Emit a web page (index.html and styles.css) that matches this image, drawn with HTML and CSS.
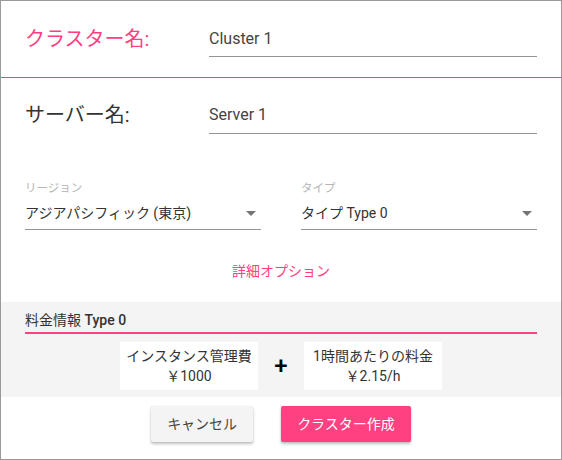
FILE: index.html
```html
<!DOCTYPE html>
<html lang="ja">
<head>
<meta charset="utf-8">
<link rel="stylesheet" href="styles.css">
</head>
<body>
<div class="dialog">
  <div class="row head">
    <div class="row-label pink">クラスター名:</div>
    <div class="field">Cluster 1</div>
  </div>
  <div class="row server">
    <div class="row-label">サーバー名:</div>
    <div class="field">Server 1</div>
  </div>
  <div class="selects">
    <div class="select">
      <div class="select-label">リージョン</div>
      <div class="select-value"><span>アジアパシフィック (東京)</span><span class="arrow"></span></div>
    </div>
    <div class="select">
      <div class="select-label">タイプ</div>
      <div class="select-value"><span>タイプ Type 0</span><span class="arrow"></span></div>
    </div>
  </div>
  <div class="more">詳細オプション</div>
  <div class="pricing">
    <div class="pricing-title">料金情報 <b>Type 0</b></div>
    <div class="pricing-boxes">
      <div class="price-box"><div>インスタンス管理費</div><div>￥1000</div></div>
      <div class="plus">+</div>
      <div class="price-box"><div>1時間あたりの料金</div><div>￥2.15/h</div></div>
    </div>
  </div>
  <div class="actions">
    <div class="btn btn-cancel">キャンセル</div>
    <div class="btn btn-create">クラスター作成</div>
  </div>
</div>
</body>
</html>
```
FILE: styles.css
```css
html, body {
  margin: 0;
  padding: 0;
  background: #fff;
}
.dialog {
  width: 562px;
  height: 460px;
  box-sizing: border-box;
  border: 1px solid #9a9a9a;
  font-family: Roboto, "Noto Sans CJK JP", sans-serif;
  color: #333;
  overflow: hidden;
}
.row {
  display: flex;
  align-items: flex-start;
  padding: 0 24px;
}
.head {
  height: 77px;
  box-sizing: border-box;
  padding-top: 28px;
  border-bottom: 1px solid #ff4081;
}
.server {
  padding-top: 27px;
}
.row-label {
  width: 184px;
  font-size: 20px;
  line-height: 20px;
  color: #333;
}
.row-label.pink {
  color: #ff4081;
}
.field {
  flex: 1;
  font-size: 16px;
  line-height: 20px;
  color: #444;
  padding-bottom: 7px;
  border-bottom: 1px solid #949494;
}
.server .field {
  padding-bottom: 8px;
}
.selects {
  display: flex;
  gap: 40px;
  padding: 0 24px;
  margin-top: 46px;
}
.select {
  flex: 1;
}
.select-label {
  font-size: 11.5px;
  line-height: 16px;
  color: #b4b4b4;
}
.select-value {
  display: flex;
  align-items: center;
  justify-content: space-between;
  margin-top: 7px;
  font-size: 14px;
  line-height: 20px;
  color: #333;
  padding-bottom: 6px;
  border-bottom: 1px solid #949494;
}
.arrow {
  width: 0;
  height: 0;
  border-left: 5px solid transparent;
  border-right: 5px solid transparent;
  border-top: 5px solid #757575;
  margin-right: 5px;
}
.more {
  margin-top: 31px;
  text-align: center;
  font-size: 14px;
  line-height: 20px;
  color: #ff4081;
}
.pricing {
  margin-top: 21px;
  background: #f4f4f4;
  padding: 8px 24px 7px;
}
.pricing-title {
  font-size: 14px;
  line-height: 20px;
  color: #333;
  padding-bottom: 2px;
  border-bottom: 2px solid #ff4081;
}
.pricing-title b {
  font-weight: 500;
}
.pricing-boxes {
  display: flex;
  justify-content: center;
  align-items: center;
  margin-top: 8px;
}
.price-box {
  width: 138px;
  box-sizing: border-box;
  background: #fff;
  padding: 4px 0;
  text-align: center;
  font-size: 14px;
  line-height: 20px;
  color: #333;
}
.plus {
  width: 46px;
  text-align: center;
  font-size: 24px;
  line-height: 24px;
  font-weight: 500;
  color: #000;
}
.actions {
  display: flex;
  justify-content: center;
  gap: 28px;
  margin-top: 9px;
}
.btn {
  height: 36px;
  line-height: 36px;
  padding: 0 16px;
  font-size: 14px;
  border-radius: 2px;
  box-shadow: 0 2px 3px rgba(0,0,0,0.25), 0 0 1px rgba(0,0,0,0.15);
}
.btn-cancel {
  background: #f4f4f4;
  color: #444;
}
.btn-create {
  background: #ff4081;
  color: #fff;
}
```
